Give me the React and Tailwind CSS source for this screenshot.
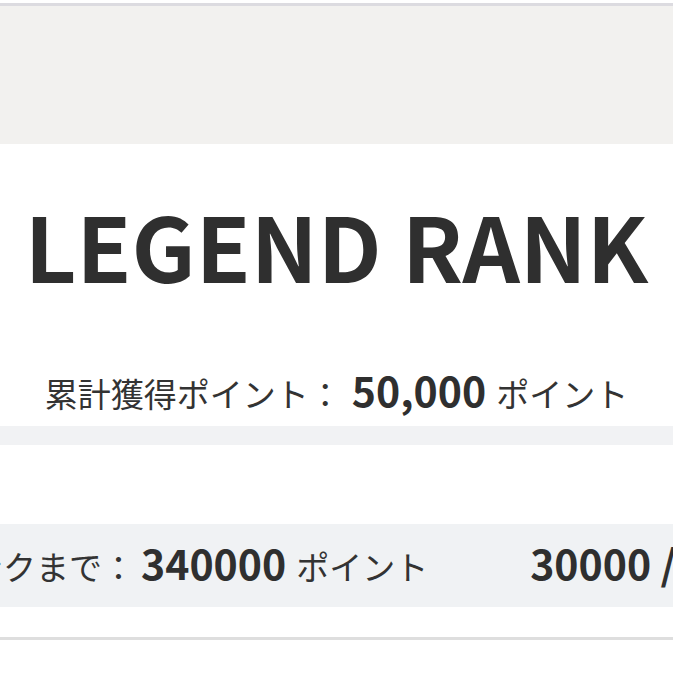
export default function App() {
  return (
    <div className="w-[673px] h-[673px] overflow-hidden bg-white text-[#333333] [font-family:'Noto_Sans_CJK_JP','Noto_Sans',sans-serif]">
      <div className="h-[3px] bg-white" />
      <div className="h-[3px] bg-[#dcdbe0]" />
      <div className="h-[138px] bg-[#f2f1ef]" />
      <div className="pt-[56px]">
        <h1 className="h-[91px] text-center text-[89.5px] leading-none font-bold text-[#2f2f2f] whitespace-nowrap">
          LEGEND RANK
        </h1>
      </div>
      <div className="mt-[78px] flex justify-center items-baseline whitespace-nowrap">
        <span className="text-[33px] leading-none">累計獲得ポイント：</span>
        <span className="ml-2.5 text-[41px] leading-none font-bold text-[#2f2f2f]">50,000</span>
        <span className="ml-2.5 text-[33px] leading-none">ポイント</span>
      </div>
      <div className="mt-[16px] h-[19px] bg-[#f1f2f4]" />
      <div className="h-[79px]" />
      <div className="h-[83px] bg-[#f0f2f4] overflow-hidden pt-[18px]">
        <div className="flex items-baseline whitespace-nowrap -ml-[129px]">
          <span className="text-[33px] leading-none">次のランクまで：</span>
          <span className="ml-1.5 text-[41px] leading-none font-bold text-[#2f2f2f]">340000</span>
          <span className="ml-2.5 text-[33px] leading-none">ポイント</span>
          <span className="ml-[102px] text-[41px] leading-none font-bold text-[#2f2f2f]">30000 / 370000</span>
        </div>
      </div>
      <div className="h-[30px]" />
      <div className="h-[3px] bg-[#dedede]" />
    </div>
  );
}
